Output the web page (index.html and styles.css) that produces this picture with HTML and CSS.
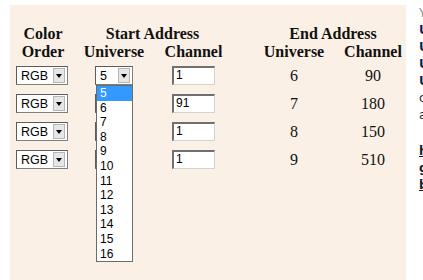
FILE: index.html
```html
<!DOCTYPE html>
<html lang="en">
<head>
    <meta charset="UTF-8">
    <title>Universe Mapping</title>
    <link rel="stylesheet" href="styles.css">
</head>
<body>
    <div class="page">
        <div class="panel">
            <div class="map-head">
                <div class="head c1">Color</div>
                <div class="head span-start">Start Address</div>
                <div class="head span-end">End Address</div>
                <div class="head c1">Order</div>
                <div class="head">Universe</div>
                <div class="head">Channel</div>
                <div class="head c5">Universe</div>
                <div class="head">Channel</div>
            </div>

            <div class="map">
                <div class="fake-select color-sel"><span class="sel-text">RGB</span><span class="sel-btn"></span></div>
                <div class="fake-select uni-sel open">
                    <span class="sel-text">5</span><span class="sel-btn"></span>
                    <ul class="drop-list">
                        <li class="active">5</li>
                        <li>6</li>
                        <li>7</li>
                        <li>8</li>
                        <li>9</li>
                        <li>10</li>
                        <li>11</li>
                        <li>12</li>
                        <li>13</li>
                        <li>14</li>
                        <li>15</li>
                        <li>16</li>
                    </ul>
                </div>
                <div class="fake-input">1</div>
                <div class="end-val c5">6</div>
                <div class="end-val">90</div>

                <div class="fake-select color-sel"><span class="sel-text">RGB</span><span class="sel-btn"></span></div>
                <div class="fake-select uni-sel covered"><span class="sel-text">6</span><span class="sel-btn"></span></div>
                <div class="fake-input">91</div>
                <div class="end-val c5">7</div>
                <div class="end-val">180</div>

                <div class="fake-select color-sel"><span class="sel-text">RGB</span><span class="sel-btn"></span></div>
                <div class="fake-select uni-sel covered"><span class="sel-text">7</span><span class="sel-btn"></span></div>
                <div class="fake-input">1</div>
                <div class="end-val c5">8</div>
                <div class="end-val">150</div>

                <div class="fake-select color-sel"><span class="sel-text">RGB</span><span class="sel-btn"></span></div>
                <div class="fake-select uni-sel covered"><span class="sel-text">8</span><span class="sel-btn"></span></div>
                <div class="fake-input">1</div>
                <div class="end-val c5">9</div>
                <div class="end-val">510</div>
            </div>
        </div>

        <div class="side">
            <div class="side-line faint">Your universes</div>
            <div class="side-line strong">Universe 5</div>
            <div class="side-line strong">Universe 6</div>
            <div class="side-line strong">Universe 7</div>
            <div class="side-line strong">Universe 8</div>
            <div class="side-line">channels</div>
            <div class="side-line">are mapped</div>
            <div class="side-links">
                <a href="#" class="side-link">help</a>
                <a href="#" class="side-link">guide</a>
                <a href="#" class="side-link">back</a>
            </div>
        </div>
    </div>
</body>
</html>
```

FILE: styles.css
```css
* {
    box-sizing: border-box;
}

body {
    margin: 0;
    background-color: #ffffff;
    overflow: hidden;
    font-family: "Liberation Serif", "Times New Roman", serif;
    color: #111111;
}

.page {
    display: flex;
    width: 423px;
    height: 280px;
    overflow: hidden;
    padding-top: 5px;
    padding-left: 10px;
}

.panel {
    flex: none;
    width: 396px;
    height: 275px;
    background-color: #faf0e6;
    padding: 20px 0 0 3px;
}

/* header and rows share the same columns */
.map-head,
.map {
    display: grid;
    grid-template-columns: 60px 82px 77px 22px 80px 78px;
}

.map-head {
    grid-auto-rows: 18px;
}

.head {
    font-size: 16px;
    font-weight: bold;
    line-height: 18px;
    text-align: center;
    white-space: nowrap;
}

.c1 {
    grid-column: 1;
}

.c5 {
    grid-column: 5;
}

.span-start {
    grid-column: 2 / 4;
}

.span-end {
    grid-column: 5 / 7;
}

.map {
    margin-top: 5px;
    grid-auto-rows: 19px;
    row-gap: 9px;
}

.fake-select {
    position: relative;
    display: flex;
    align-items: center;
    height: 19px;
    background-color: #ffffff;
    border: 1px solid #7f7f7f;
    border-top-color: #5c5c5c;
    border-left-color: #5c5c5c;
    font-family: "Liberation Sans", Arial, sans-serif;
    font-size: 12.5px;
    color: #000000;
}

.color-sel {
    width: 52px;
    margin-left: 3px;
}

.uni-sel {
    width: 38px;
    margin-left: 22px;
}

/* hidden behind the open list anyway */
.uni-sel.covered .sel-text {
    visibility: hidden;
}

.sel-text {
    flex: 1;
    padding-left: 4px;
}

.sel-btn {
    position: relative;
    width: 12px;
    height: 15px;
    margin-right: 2px;
    background-color: #e6e6e6;
    border: 1px solid #b5b5b5;
}

.sel-btn::after {
    content: "";
    position: absolute;
    left: 2px;
    top: 5px;
    border-left: 3.5px solid transparent;
    border-right: 3.5px solid transparent;
    border-top: 4px solid #000000;
}

.drop-list {
    position: absolute;
    top: 18px;
    left: 0;
    z-index: 5;
    width: 37px;
    margin: 0;
    padding: 0;
    list-style: none;
    background-color: #ffffff;
    border: 1px solid #6b6b6b;
    font-size: 12px;
}

.drop-list li {
    height: 14.6px;
    line-height: 14.6px;
    padding-left: 3px;
}

.drop-list li.active {
    background-color: #3399ff;
    color: #ffffff;
}

.fake-input {
    width: 43px;
    height: 19px;
    margin-left: 17px;
    padding-left: 2px;
    background-color: #ffffff;
    border-style: solid;
    border-width: 2px 1px 1px 2px;
    border-color: #707070 #d2d2d2 #d2d2d2 #707070;
    font-family: "Liberation Sans", Arial, sans-serif;
    font-size: 12px;
    line-height: 15px;
    color: #000000;
}

.end-val {
    font-size: 16px;
    line-height: 19px;
    text-align: center;
}

.side {
    flex: none;
    width: 200px;
    margin-left: 13px;
    font-family: "DejaVu Sans", Verdana, sans-serif;
    font-size: 12px;
    line-height: 17px;
}

.side-line {
    color: #2a2a3a;
    white-space: nowrap;
}

.side-line.faint {
    color: #8a8a8a;
}

.side-line.strong {
    font-weight: bold;
    color: #1c1c3c;
}

.side-links {
    margin-top: 19px;
}

.side-link {
    display: block;
    color: #1c1c1c;
    font-weight: bold;
}
```
